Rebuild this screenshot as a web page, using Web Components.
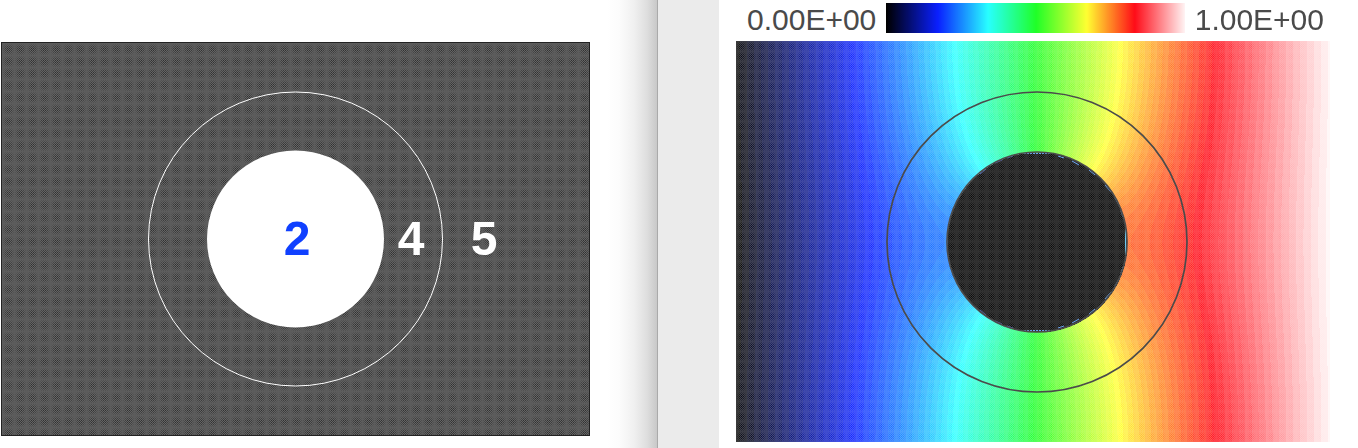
<!DOCTYPE html>
<html lang="en">
<head>
<meta charset="utf-8">
<title>Region map and potential field</title>
<style>
html, body { margin: 0; height: 100%; background: #fff; overflow: hidden; font-family: "Liberation Sans", Arial, sans-serif; }
</style>
</head>
<body>
<field-viewer></field-viewer>
<script>
// Brightness of a fine mesh: checks that swell in the middle of each n-pixel cell.
const weave = (x, y, n) => {
  const e = Math.abs(Math.sin(Math.PI * x / n) * Math.sin(Math.PI * y / n));
  const check = (x + y) % 2 ? 1 : -1;
  const dot = x % 2 && y % 2 ? -1 : 0;
  return 0.84 - 0.16 * e + 0.3 * check * e + 0.14 * dot * e;
};

function paint(canvas, colorAt) {
  const draw = () => {
    const w = canvas.clientWidth, h = canvas.clientHeight;
    if (!w || !h) return;
    canvas.width = w;
    canvas.height = h;
    const ctx = canvas.getContext('2d');
    const img = ctx.createImageData(w, h);
    for (let y = 0, i = 0; y < h; y++) {
      for (let x = 0; x < w; x++, i += 4) {
        const c = colorAt(x, y, w, h);
        img.data[i] = c[0];
        img.data[i + 1] = c[1];
        img.data[i + 2] = c[2];
        img.data[i + 3] = 255;
      }
    }
    ctx.putImageData(img, 0, 0);
  };
  draw();
  new ResizeObserver(draw).observe(canvas);
}

const STOPS = [[0, 0, 0, 0], [0.172, 10, 32, 255], [0.34, 40, 255, 255], [0.5, 32, 255, 40], [0.67, 255, 255, 50], [0.83, 255, 12, 24], [1, 255, 246, 246]];
function ramp(t) {
  t = Math.max(0, Math.min(1, t));
  let k = 1;
  while (k < STOPS.length - 1 && t > STOPS[k][0]) k++;
  const a = STOPS[k - 1], b = STOPS[k], f = (t - a[0]) / (b[0] - a[0]);
  return [1, 2, 3].map(j => a[j] + (b[j] - a[j]) * f);
}

class RegionMap extends HTMLElement {
  constructor() {
    super();
    this.attachShadow({ mode: 'open' }).innerHTML = `
      <style>
        :host { display: grid; aspect-ratio: 589 / 394; box-sizing: border-box; border: 1px solid #222; }
        canvas, svg { grid-area: 1 / 1; width: 100%; height: 100%; min-width: 0; min-height: 0; display: block; }
        text { font: bold 48px "Liberation Sans", Arial, sans-serif; text-anchor: middle; fill: #fff; }
        .core { fill: #1040ff; }
      </style>
      <canvas></canvas>
      <svg viewBox="0 0 587 392" role="img" aria-label="Regions 2, 4 and 5">
        <circle cx="293.5" cy="196" r="147" fill="none" stroke="#fff"/>
        <circle cx="293.5" cy="196" r="88.5" fill="#fff"/>
        <text class="core" x="295" y="212">2</text>
        <text x="409" y="212">4</text>
        <text x="482" y="212">5</text>
      </svg>`;
  }
  connectedCallback() {
    paint(this.shadowRoot.querySelector('canvas'), (x, y) => {
      const v = 28 + 76 * weave(x, y, 12);
      return [v, v, v];
    });
  }
}

class ColorScale extends HTMLElement {
  constructor() {
    super();
    this.attachShadow({ mode: 'open' }).innerHTML = `
      <style>
        :host { display: flex; align-items: center; gap: 10px; height: 30px; font-size: 30px; line-height: 34px; color: #4a4a4a; }
        canvas { flex: 1; min-width: 0; height: 30px; }
        ::slotted(span) { white-space: nowrap; padding-top: 4px; }
      </style>
      <slot name="min"></slot><canvas></canvas><slot name="max"></slot>`;
  }
  connectedCallback() {
    paint(this.shadowRoot.querySelector('canvas'), (x, y, w) => ramp(x / w));
  }
}

class PotentialField extends HTMLElement {
  constructor() {
    super();
    this.attachShadow({ mode: 'open' }).innerHTML = `
      <style>
        :host { display: grid; aspect-ratio: 594 / 401; }
        canvas, svg { grid-area: 1 / 1; width: 100%; height: 100%; min-width: 0; min-height: 0; display: block; }
      </style>
      <canvas></canvas>
      <svg viewBox="0 0 594 401" fill="none" stroke="#4b4b4b" role="img" aria-label="Potential around a cylinder">
        <g stroke="#6aa4f0">
          <path d="M288 112.500H314M288 289.500H314" stroke-dasharray="2 1"/>
          <path d="M389.500 188V214" stroke="#6cc8f0"/>
          <path d="M322 115L328 117M336 120L343 124M353 129L359 134M369 144L375 151M379 157L383 164M385 170L387 176M322 287L328 285M336 282L343 278M353 273L359 268M369 258L375 251M379 245L383 238M385 232L387 226"/>
          <path d="M277 115L271 117M266 119L259 122M250 128L244 133M277 287L271 285M266 283L259 280M250 274L244 269" stroke="#5a6ab8"/>
        </g>
        <circle cx="301" cy="201" r="90" stroke-width="1.700"/>
        <circle cx="301" cy="201" r="150" stroke-width="1.700"/>
      </svg>`;
  }
  connectedCallback() {
    // Closed form for a row of insulated cylinders in a uniform gradient.
    paint(this.shadowRoot.querySelector('canvas'), (px, py, w) => {
      const s = w / 594, x = px / s - 301, y = py / s - 201;
      const m = weave(px, py, 10);
      if (x * x + y * y < 8100) {
        const v = 72 * m - 12;
        return [v, v, v];
      }
      const k = 2 * Math.PI / 401;
      const wake = 63 * Math.sinh(k * x) / (Math.cosh(k * x) - Math.cos(k * y));
      const t = 0.505 + (x + wake) * 0.00139;
      const c = ramp(Math.round(t * 100) / 100);
      return c.map(v => v + (255 - v) * (0.34 * m - 0.06));
    });
  }
}

class FieldViewer extends HTMLElement {
  constructor() {
    super();
    this.attachShadow({ mode: 'open' }).innerHTML = `
      <style>
        :host { display: grid; grid-template-columns: 658fr 61fr 639fr; height: 100%; }
        .left { box-sizing: border-box; padding: 42px 67px 0 1px; border-right: 1px solid #aaa;
          background: linear-gradient(to left, #c8c8c8, #dedede 10px, #f0f0f0 23px, #fcfcfc 38px, #fff 50px); }
        .gutter { background: #ebebeb; }
        .right { box-sizing: border-box; padding: 3px 28px 0 17px; display: flex; flex-direction: column; gap: 8px; min-width: 0; }
        color-scale { margin: 0 6px 0 11px; }
      </style>
      <section class="left"><region-map></region-map></section>
      <div class="gutter"></div>
      <section class="right">
        <color-scale><span slot="min">0.00E+00</span><span slot="max">1.00E+00</span></color-scale>
        <potential-field></potential-field>
      </section>`;
  }
}

customElements.define('region-map', RegionMap);
customElements.define('color-scale', ColorScale);
customElements.define('potential-field', PotentialField);
customElements.define('field-viewer', FieldViewer);
</script>
</body>
</html>
